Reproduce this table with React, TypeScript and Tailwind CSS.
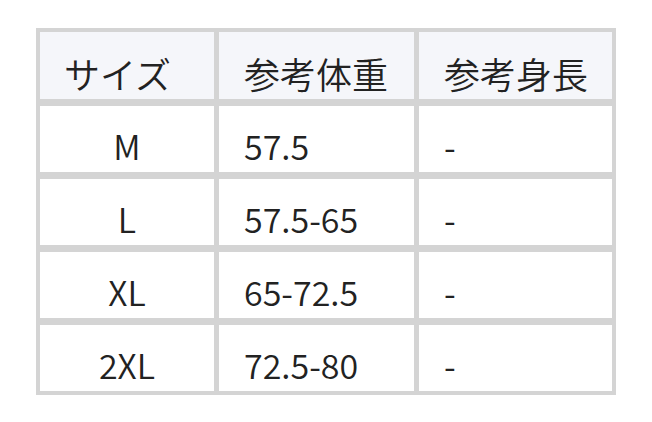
import React from "react";

const rows = [
  ["M", "57.5", "-"],
  ["L", "57.5-65", "-"],
  ["XL", "65-72.5", "-"],
  ["2XL", "72.5-80", "-"],
];

export default function App() {
  return (
    <div
      className="w-[652px] h-[422px] bg-white pt-[28px] pl-[36px]"
      style={{ fontFamily: '"Noto Sans CJK JP", "Noto Sans", sans-serif' }}
    >
      <div className="w-[580px] bg-[#d4d4d4] p-[4px] grid grid-cols-[174px_195px_193px] grid-rows-[67px_66px_66px_66px_66px] gap-x-[5px] gap-y-[7px] text-[#222] font-[350]">
        <div className="bg-[#f5f6fa] flex items-end pl-[24px] pb-[8px] text-[36px] leading-none">サイズ</div>
        <div className="bg-[#f5f6fa] flex items-end pl-[25px] pb-[8px] text-[36px] leading-none">参考体重</div>
        <div className="bg-[#f5f6fa] flex items-end pl-[25px] pb-[8px] text-[36px] leading-none">参考身長</div>
        {rows.map((r, i) => (
          <React.Fragment key={i}>
            <div className="bg-white flex items-end justify-center pb-[9px] text-[34px] leading-none">{r[0]}</div>
            <div className="bg-white flex items-end pl-[25px] pb-[9px] text-[34px] leading-none">{r[1]}</div>
            <div className="bg-white flex items-end pl-[25px] pb-[9px] text-[34px] leading-none">{r[2]}</div>
          </React.Fragment>
        ))}
      </div>
    </div>
  );
}
